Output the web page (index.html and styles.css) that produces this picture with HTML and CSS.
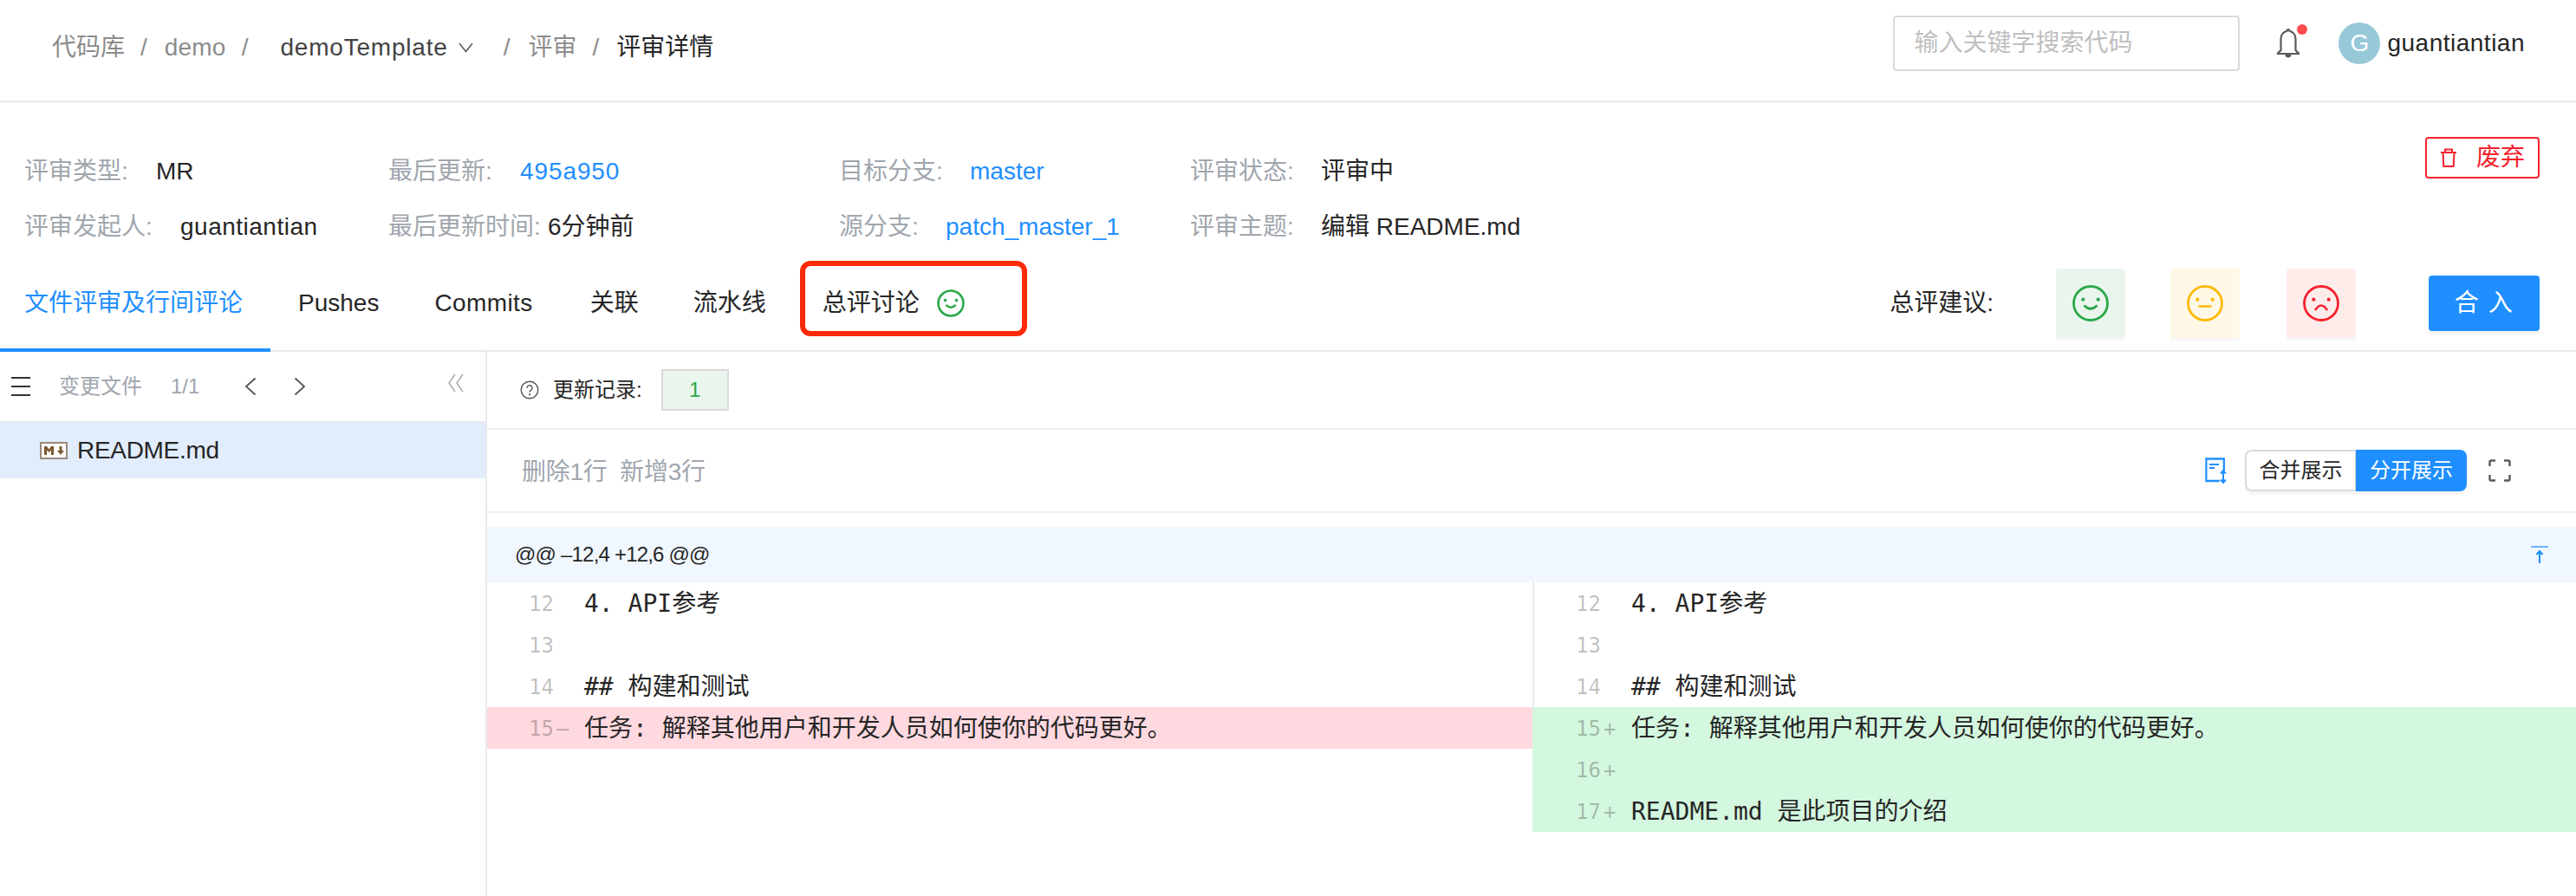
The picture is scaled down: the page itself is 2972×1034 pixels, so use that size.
FILE: index.html
```html
<!DOCTYPE html>
<html lang="zh">
<head>
<meta charset="utf-8">
<title>评审详情</title>
<link rel="stylesheet" href="styles.css">
</head>
<body>
<header class="topbar">
  <nav class="crumbs">
    <span class="c-muted">代码库</span><span class="sep">/</span>
    <span class="c-muted c-demo">demo</span><span class="sep">/</span>
    <span class="c-repo">demoTemplate</span>
    <svg class="chev" width="17" height="12" viewBox="0 0 17 12"><path d="M1 1l7.500 9.500L16 1" fill="none" stroke="#555" stroke-width="1.400"/></svg>
    <span class="sep sep-wide">/</span>
    <span class="c-muted">评审</span><span class="sep">/</span>
    <span class="c-cur">评审详情</span>
  </nav>
  <div class="top-right">
    <div class="search">输入关键字搜索代码</div>
    <div class="bell">
      <svg width="28" height="36" viewBox="0 0 28 36"><path d="M14 2c-1 0-1.500.7-1.500 1.800C8 5 5.500 8.500 5.500 13v13L2 29.500V30h24v-.5L22.500 26V13c0-4.500-2.500-8-7-9.200C15.500 2.700 15 2 14 2z" fill="none" stroke="#595959" stroke-width="2.200"/><path d="M10.500 31a3.500 3.500 0 0 0 7 0" fill="#595959"/></svg>
      <i class="dot"></i>
    </div>
    <span class="avatar">G</span>
    <span class="uname">guantiantian</span>
  </div>
</header>

<section class="info">
  <div class="info-col col-a">
    <div class="info-row"><span class="lbl lbl-a">评审类型:</span><span>MR</span></div>
    <div class="info-row"><span class="lbl lbl-b">评审发起人:</span><span class="uname-v">guantiantian</span></div>
  </div>
  <div class="info-col col-b">
    <div class="info-row"><span class="lbl lbl-c">最后更新:</span><span class="link link-hash">495a950</span></div>
    <div class="info-row"><span class="lbl lbl-d">最后更新时间:</span><span>6分钟前</span></div>
  </div>
  <div class="info-col col-c">
    <div class="info-row"><span class="lbl lbl-e">目标分支:</span><span class="link">master</span></div>
    <div class="info-row"><span class="lbl lbl-f">源分支:</span><span class="link">patch_master_1</span></div>
  </div>
  <div class="info-col col-d">
    <div class="info-row"><span class="lbl lbl-g">评审状态:</span><span>评审中</span></div>
    <div class="info-row"><span class="lbl lbl-g">评审主题:</span><span>编辑 README.md</span></div>
  </div>
  <button class="discard">
    <svg width="20" height="22" viewBox="0 0 20 22"><path d="M1 5h18M6 5V1.500h8V5M3.500 5l.8 16h11.400l.8-16" fill="none" stroke="#f5222d" stroke-width="2"/></svg>
    <span>废弃</span>
  </button>
</section>

<section class="tabs">
  <a class="tab tab-on">文件评审及行间评论</a>
  <a class="tab">Pushes</a>
  <a class="tab tab-commits">Commits</a>
  <a class="tab">关联</a>
  <a class="tab">流水线</a>
  <a class="tab tab-mark">总评讨论
    <svg class="face-sm" width="32" height="32" viewBox="0 0 42 42"><circle cx="21" cy="21" r="19" fill="none" stroke="#2ba84a" stroke-width="3.400"/><circle cx="12.500" cy="16.500" r="2.400" fill="#2ba84a"/><circle cx="29.500" cy="16.500" r="2.400" fill="#2ba84a"/><path d="M13.500 23.500Q21 31 28.500 23.500" fill="none" stroke="#2ba84a" stroke-width="3.200"/></svg>
  </a>
  <div class="verdict">
    <span class="verdict-lbl">总评建议:</span>
    <span class="face face-g"><svg width="42" height="42" viewBox="0 0 42 42"><circle cx="21" cy="21" r="19.500" fill="none" stroke="#2ba84a" stroke-width="2.800"/><circle cx="12.300" cy="16.700" r="2.100" fill="#2ba84a"/><circle cx="29.700" cy="16.700" r="2.100" fill="#2ba84a"/><path d="M13.500 23.500Q21 31 28.500 23.500" fill="none" stroke="#2ba84a" stroke-width="2.600"/></svg></span>
    <span class="face face-y"><svg width="42" height="42" viewBox="0 0 42 42"><circle cx="21" cy="21" r="19.500" fill="none" stroke="#fdb900" stroke-width="2.800"/><circle cx="12.300" cy="16.700" r="2.100" fill="#fdb900"/><circle cx="29.700" cy="16.700" r="2.100" fill="#fdb900"/><path d="M13.500 24.500h15" fill="none" stroke="#fdb900" stroke-width="2.400"/></svg></span>
    <span class="face face-r"><svg width="42" height="42" viewBox="0 0 42 42"><circle cx="21" cy="21" r="19.500" fill="none" stroke="#f5222d" stroke-width="2.800"/><circle cx="12.300" cy="16.700" r="2.100" fill="#f5222d"/><circle cx="29.700" cy="16.700" r="2.100" fill="#f5222d"/><path d="M14 29Q21 18 28 29" fill="none" stroke="#f5222d" stroke-width="2.600"/></svg></span>
    <button class="merge">合 入</button>
  </div>
</section>

<main class="body">
  <aside class="side">
    <div class="side-bar">
      <svg class="menu" width="22" height="22" viewBox="0 0 22 22"><path d="M0 1h22M0 11h22M0 21h22" stroke="#333" stroke-width="2"/></svg>
      <span class="side-t">变更文件</span>
      <span class="side-n">1/1</span>
      <svg class="nav-p" width="14" height="22" viewBox="0 0 14 22"><path d="M12.500 1.500L2 11l10.500 9.500" fill="none" stroke="#555" stroke-width="1.800"/></svg>
      <svg class="nav-n" width="14" height="22" viewBox="0 0 14 22"><path d="M1.500 1.500L12 11 1.500 20.500" fill="none" stroke="#555" stroke-width="1.800"/></svg>
      <svg class="collapse" width="20" height="22" viewBox="0 0 20 22"><path d="M9 1L2 11l7 10M18 1l-7 10 7 10" fill="none" stroke="#a8adb5" stroke-width="1.500"/></svg>
    </div>
    <div class="file">
      <svg width="32" height="20" viewBox="0 0 32 20"><rect x="1" y="1" width="30" height="18" fill="#fff" stroke="#9a8a7c" stroke-width="2"/><path d="M5 15V5h3l2.500 3.500L13 5h3v10h-3V9.500L10.500 12 8 9.500V15z" fill="#7a5a32"/><path d="M20 10h2.500V5h3v5H28l-4 5z" fill="#7a5a32"/></svg>
      <span class="fname">README.md</span>
    </div>
  </aside>
  <section class="main">
    <div class="rec">
      <svg width="22" height="22" viewBox="0 0 22 22"><circle cx="11" cy="11" r="9.800" fill="none" stroke="#555" stroke-width="1.400"/><path d="M8 8.800a3 3 0 1 1 4.600 2.500c-1 .6-1.600 1.100-1.600 2.300" fill="none" stroke="#555" stroke-width="1.400"/><circle cx="11" cy="16.200" r="1.100" fill="#555"/></svg>
      <span class="rec-l">更新记录:</span>
      <span class="rec-v">1</span>
    </div>
    <div class="stat">
      <span class="stat-t">删除1行&nbsp;&nbsp;新增3行</span>
      <div class="stat-r">
        <svg class="doc" width="26" height="30" viewBox="0 0 26 30"><path d="M18 27H1.500V1.500h22V15" fill="none" stroke="#1f8fff" stroke-width="2.400" transform="scale(.93 1)"/><path d="M5 8h11M5 12h6" stroke="#1f8fff" stroke-width="2.200"/><path d="M21 15v14M18 18.500l3-3.500 3 3.500M18 25.500l3 3.500 3-3.500" fill="none" stroke="#1f8fff" stroke-width="2"/></svg>
        <div class="seg"><span class="seg-a">合并展示</span><span class="seg-b">分开展示</span></div>
        <svg class="full" width="26" height="26" viewBox="0 0 26 26"><path d="M1.500 8V3a1.500 1.500 0 0 1 1.500-1.500h5M18 1.500h5A1.500 1.500 0 0 1 24.500 3v5M24.500 18v5a1.500 1.500 0 0 1-1.500 1.500h-5M8 24.500H3A1.500 1.500 0 0 1 1.500 23v-5" fill="none" stroke="#595959" stroke-width="2.400"/></svg>
      </div>
    </div>
    <div class="hunk">
      <span class="hunk-t">@@ –12,4 +12,6 @@</span>
      <svg width="20" height="20" viewBox="0 0 20 20"><path d="M0 1h20" stroke="#6db4ff" stroke-width="2"/><path d="M10 20V6.500M6.500 10L10 6l3.500 4" fill="none" stroke="#1f8fff" stroke-width="2"/></svg>
    </div>
    <div class="diff">
      <div class="pane">
        <div class="ln"><span class="no">12</span><span class="mk"></span><span class="code">4. API参考</span></div>
        <div class="ln"><span class="no">13</span><span class="mk"></span><span class="code"></span></div>
        <div class="ln"><span class="no">14</span><span class="mk"></span><span class="code">## 构建和测试</span></div>
        <div class="ln ln-del"><span class="no">15</span><span class="mk">–</span><span class="code">任务: 解释其他用户和开发人员如何使你的代码更好。</span></div>
      </div>
      <div class="pane pane-r">
        <div class="ln"><span class="no">12</span><span class="mk"></span><span class="code">4. API参考</span></div>
        <div class="ln"><span class="no">13</span><span class="mk"></span><span class="code"></span></div>
        <div class="ln"><span class="no">14</span><span class="mk"></span><span class="code">## 构建和测试</span></div>
        <div class="ln ln-add"><span class="no">15</span><span class="mk">+</span><span class="code">任务: 解释其他用户和开发人员如何使你的代码更好。</span></div>
        <div class="ln ln-add"><span class="no">16</span><span class="mk">+</span><span class="code"></span></div>
        <div class="ln ln-add"><span class="no">17</span><span class="mk">+</span><span class="code">README.md 是此项目的介绍</span></div>
      </div>
    </div>
  </section>
</main>
</body>
</html>
```
FILE: styles.css
```css
*, *::before, *::after { box-sizing: border-box; }
html, body { margin: 0; padding: 0; }
body {
  width: 2972px;
  height: 1034px;
  overflow: hidden;
  background: #fff;
  color: #262626;
  font: 28px/40px "Liberation Sans", "Noto Sans CJK SC", sans-serif;
}
svg { display: block; flex: none; }

.topbar {
  height: 118px;
  border-bottom: 2px solid #e8eaec;
  padding: 0 59px 16px 60px;
  display: flex;
  align-items: center;
  justify-content: space-between;
}
.crumbs { display: flex; align-items: center; margin-top: 10px; }
.c-muted { color: #8c8c8c; }
.c-cur { color: #262626; }
.c-demo { letter-spacing: .2px; }
.c-repo { color: #434343; margin-left: 17px; letter-spacing: .8px; }
.sep { color: #8c8c8c; margin: 0 20px 0 18px; }
.sep-wide { margin-left: 35px; margin-right: 21px; }
.chev { margin-left: 12px; }
.top-right { display: flex; align-items: center; }
.search {
  width: 400px; height: 64px;
  border: 2px solid #d9d9d9; border-radius: 4px;
  padding: 0 22px;
  color: #bfbfbf;
  line-height: 60px;
}
.bell { position: relative; width: 28px; margin-left: 42px; }
.dot {
  position: absolute; left: 24px; top: -4px;
  width: 12px; height: 12px; border-radius: 50%;
  background: #ff4d4f;
}
.avatar {
  width: 48px; height: 48px; margin-left: 44px;
  border-radius: 50%;
  background: #96c8d8; color: #fff;
  text-align: center; line-height: 48px;
}
.uname { margin-left: 8px; letter-spacing: .5px; }

.info {
  height: 172px;
  padding: 60px 42px 0 28px;
  display: flex;
}
.info-col { display: flex; flex-direction: column; gap: 24px; }
.info-row { display: flex; height: 40px; white-space: nowrap; }
.lbl { color: #a0a6ae; }
.col-a { width: 420px; }
.col-b { width: 520px; }
.col-c { width: 405px; }
.col-d { flex: 1; }
.lbl-a { width: 152px; }
.lbl-b { width: 180px; }
.lbl-c { width: 152px; }
.lbl-d { width: 184px; }
.lbl-e { width: 151px; }
.lbl-f { width: 123px; }
.lbl-g { width: 151px; }
.link { color: #1f8fff; }
.link-hash { letter-spacing: .9px; }
.uname-v { letter-spacing: .5px; }
.discard {
  width: 132px; height: 48px; margin-top: -20px;
  border: 2px solid #f5222d; border-radius: 4px;
  background: #fff; color: #f5222d;
  font: inherit; line-height: 44px;
  display: flex; align-items: center; justify-content: center; gap: 22px;
  padding: 0;
}

.tabs {
  height: 116px;
  border-bottom: 2px solid #e8eaec;
  display: flex;
  align-items: center;
  position: relative;
  padding-top: 6px;
}
.tab { white-space: nowrap; line-height: 40px; }
.tab:nth-child(2) { margin-left: 32px; }
.tab:nth-child(3) { margin-left: 64px; }
.tab:nth-child(4) { margin-left: 66px; }
.tab:nth-child(5) { margin-left: 63px; }
.tab-commits { letter-spacing: .4px; }
.tab-on { color: #1f8fff; position: relative; width: 312px; padding-left: 28px; }
.tab-on::after {
  content: "";
  position: absolute; left: 0; right: 0; bottom: -36px;
  height: 4px; background: #1f8fff;
}
.tab.tab-mark {
  margin-left: 65px;
  display: flex; align-items: center; gap: 20px;
  position: relative;
}
.tab-mark::before {
  content: "";
  position: absolute; left: -26px; top: -29px;
  width: 262px; height: 87px;
  border: 6px solid #ff2a0a; border-radius: 12px;
}
.verdict { margin-left: auto; display: flex; align-items: center; padding-right: 42px; }
.verdict-lbl { margin-right: 72px; }
.face {
  width: 80px; height: 80px; border-radius: 4px;
  display: flex; align-items: center; justify-content: center;
  box-shadow: 0 4px 0 #f8f8f8;
}
.face-g { background: #eaf5ed; }
.face-y { background: #fff8e6; margin-left: 52px; }
.face-r { background: #feeceb; margin-left: 54px; }
.merge {
  width: 128px; height: 64px; margin-left: 84px;
  border: 0; border-radius: 4px;
  background: #1f8fff; color: #fff;
  font: inherit; letter-spacing: 1.500px;
  box-shadow: 0 4px 0 #f4f4f4;
  padding: 0;
}

.body { display: flex; height: 628px; }
.side { width: 562px; flex: none; border-right: 2px solid #e8eaec; }
.side-bar {
  height: 80px;
  display: flex; align-items: center;
  padding-left: 13px;
  position: relative;
  font-size: 24px;
}
.side-t { color: #a0a6ae; margin-left: 33px; }
.side-n { color: #a0a6ae; margin-left: 33px; }
.nav-p { margin-left: 52px; }
.nav-n { margin-left: 43px; }
.collapse { position: absolute; right: 24px; top: 25px; }
.file {
  height: 66px;
  background: #e1edfd;
  border-top: 2px solid #e8eaec;
  display: flex; align-items: center; gap: 11px;
  padding-left: 46px;
}
.fname { letter-spacing: -.3px; }
.main { flex: 1; min-width: 0; display: flex; flex-direction: column; }
.rec {
  height: 90px;
  border-bottom: 2px solid #eee;
  display: flex; align-items: center;
  padding-left: 38px;
  font-size: 24px;
}
.rec-l { margin-left: 16px; }
.rec-v {
  width: 78px; height: 48px; margin-left: 22px;
  border: 2px solid #d9d9d9;
  background: #eaf5ed; color: #2ba84a;
  text-align: center; line-height: 44px;
}
.stat {
  height: 96px;
  border-bottom: 2px solid #eee;
  display: flex; align-items: center; justify-content: space-between;
  padding: 0 75px 0 40px;
}
.stat-t { color: #a0a6ae; letter-spacing: -.3px; padding-top: 3px; }
.stat-r { display: flex; align-items: center; }
.seg {
  display: flex; margin-left: 20px;
  height: 48px; font-size: 24px; line-height: 44px;
  box-shadow: 0 4px 0 #f6f6f6; border-radius: 8px;
}
.seg-a {
  width: 128px; text-align: center;
  border: 2px solid #d9d9d9; border-right-width: 1px;
  border-radius: 8px 0 0 8px;
}
.seg-b {
  width: 128px; text-align: center;
  background: #1f8fff; color: #fff;
  border-radius: 0 8px 8px 0;
  line-height: 48px;
}
.full { margin-left: 25px; }
.hunk {
  margin-top: 16px;
  height: 64px;
  background: #f0f7ff;
  display: flex; align-items: center; justify-content: space-between;
  padding: 0 32px;
  font-size: 24px;
}
.hunk-t { letter-spacing: -.8px; }
.diff { display: grid; grid-template-columns: 1206px 1fr; }
.pane-r .ln { border-left: 2px solid #e8eaec; }
.pane-r .ln-add { border-left-color: #d4f7df; }
.ln { height: 48px; display: flex; align-items: center; padding-top: 2px; }
.ln-del { background: #ffd9e0; }
.ln-add { background: #d4f7df; }
.no, .mk {
  flex: none;
  font-family: "DejaVu Sans Mono", monospace;
  font-size: 24px;
  color: rgba(0, 0, 0, .25);
}
.no { width: 77px; text-align: right; }
.mk { width: 35px; padding-left: 3px; }
.code {
  white-space: pre;
  font-family: "DejaVu Sans Mono", "Noto Sans CJK SC", monospace;
  color: #262626;
}
```
